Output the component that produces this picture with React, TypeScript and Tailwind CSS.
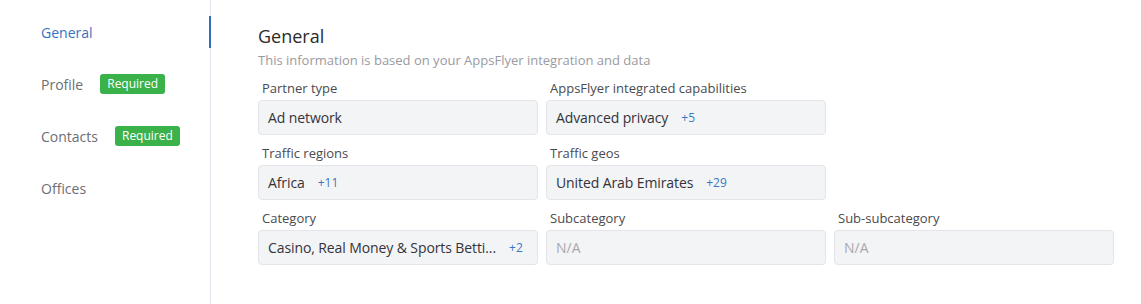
const fields = [
  { label: "Partner type", value: "Ad network" },
  { label: "AppsFlyer integrated capabilities", value: "Advanced privacy", more: "+5" },
  null,
  { label: "Traffic regions", value: "Africa", more: "+11" },
  { label: "Traffic geos", value: "United Arab Emirates", more: "+29" },
  null,
  { label: "Category", value: "Casino, Real Money & Sports Betti...", more: "+2" },
  { label: "Subcategory", value: "N/A", empty: true },
  { label: "Sub-subcategory", value: "N/A", empty: true },
];

const nav = [
  { name: "General", active: true },
  { name: "Profile", required: true },
  { name: "Contacts", required: true },
  { name: "Offices" },
];

export default function App() {
  return (
    <div className="flex h-[304px] w-[1141px] bg-white font-['Open_Sans',sans-serif] overflow-hidden">
      <div className="w-[211px] shrink-0 border-r border-[#e2e2ea] pt-[16px] flex flex-col gap-5">
        {nav.map((n) => (
          <div
            key={n.name}
            className={
              "h-8 flex items-center pl-[41px] text-[14px] " +
              (n.active
                ? "-mr-px border-r-2 border-[#2f6fc0] text-[#3572c4]"
                : "text-[#6e6e73]")
            }
          >
            <span>{n.name}</span>
            {n.required && (
              <span className="ml-[17px] h-5 px-[7px] rounded-[3px] bg-[#3bb14a] text-white text-[12px] leading-5">
                Required
              </span>
            )}
          </div>
        ))}
      </div>

      <div className="pl-[47px] pt-[24px]">
        <h2 className="text-[18px] leading-6 text-[#2b2b2b]">General</h2>
        <p className="mt-[3px] text-[13px] leading-[18px] text-[#9a9aa0]">
          This information is based on your AppsFlyer integration and data
        </p>
        <div className="mt-[10px] grid grid-cols-[280px_280px_280px] gap-x-2 gap-y-[9px]">
          {fields.map((f, i) =>
            f ? (
              <div key={i}>
                <div className="text-[13px] leading-[18px] text-[#4a4a4f] pl-1">{f.label}</div>
                <div className="mt-[3px] h-[35px] rounded-[4px] border border-[#e3e5ea] bg-[#f3f4f6] px-[9px] flex items-center text-[14px] whitespace-nowrap overflow-hidden">
                  <span className={f.empty ? "text-[#a8a8ae]" : "text-[#333338] tracking-[-0.1px]"}>{f.value}</span>
                  {f.more && <span className="ml-[13px] text-[12px] text-[#3b78c4]">{f.more}</span>}
                </div>
              </div>
            ) : (
              <div key={i} />
            )
          )}
        </div>
      </div>
    </div>
  );
}
